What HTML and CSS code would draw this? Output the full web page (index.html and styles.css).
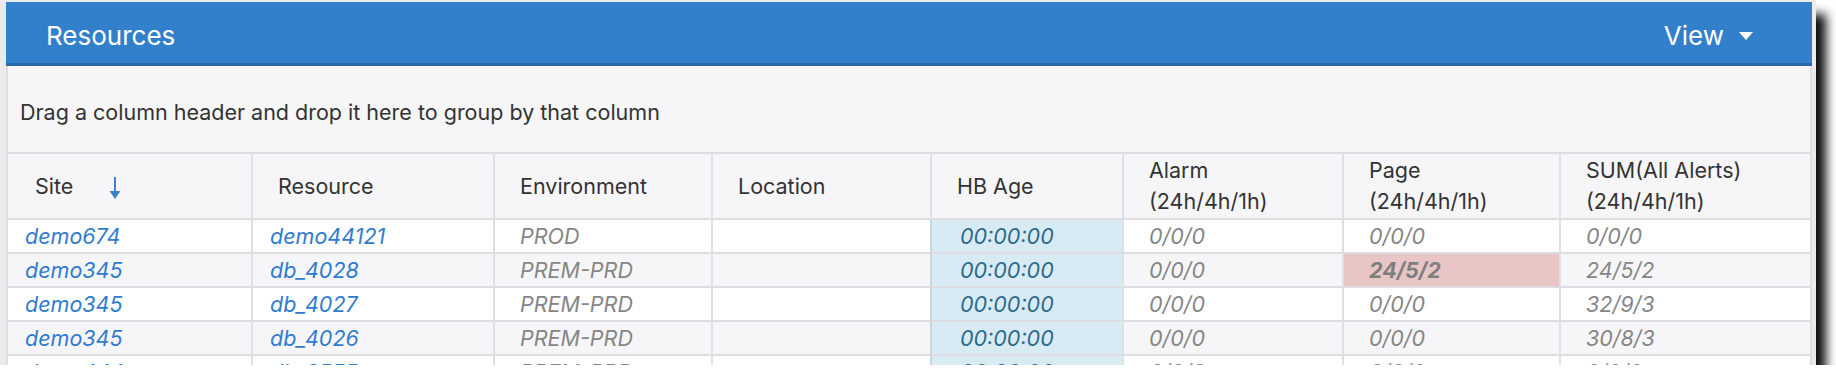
FILE: index.html
```html
<!DOCTYPE html>
<html>
<head>
<meta charset="utf-8">
<link rel="stylesheet" href="styles.css">
</head>
<body>
<div class="window">
  <div class="panel">
    <div class="panel-head">
      <div class="title">Resources</div>
      <div class="view">View <span class="caret"></span></div>
    </div>
    <div class="panel-body">
      <div class="group-area">Drag a column header and drop it here to group by that column</div>
      <div class="grid">
        <div class="th">Site <svg class="sort" width="14" height="24" viewBox="0 0 14 24"><line x1="7" y1="1" x2="7" y2="17" stroke="#3a82cc" stroke-width="2"/><polygon points="1.5,15 12.5,15 7,23" fill="#3a82cc"/></svg></div>
        <div class="th">Resource</div>
        <div class="th">Environment</div>
        <div class="th">Location</div>
        <div class="th">HB Age</div>
        <div class="th two">Alarm<br>(24h/4h/1h)</div>
        <div class="th two">Page<br>(24h/4h/1h)</div>
        <div class="th two">SUM(All Alerts)<br>(24h/4h/1h)</div>

        <div class="td link">demo674</div><div class="td link">demo44121</div><div class="td">PROD</div><div class="td"></div><div class="td hb">00:00:00</div><div class="td">0/0/0</div><div class="td">0/0/0</div><div class="td">0/0/0</div>

        <div class="td alt link">demo345</div><div class="td alt link">db_4028</div><div class="td alt">PREM-PRD</div><div class="td alt"></div><div class="td alt hb">00:00:00</div><div class="td alt">0/0/0</div><div class="td alt hot">24/5/2</div><div class="td alt">24/5/2</div>

        <div class="td link">demo345</div><div class="td link">db_4027</div><div class="td">PREM-PRD</div><div class="td"></div><div class="td hb">00:00:00</div><div class="td">0/0/0</div><div class="td">0/0/0</div><div class="td">32/9/3</div>

        <div class="td alt link">demo345</div><div class="td alt link">db_4026</div><div class="td alt">PREM-PRD</div><div class="td alt"></div><div class="td alt hb">00:00:00</div><div class="td alt">0/0/0</div><div class="td alt">0/0/0</div><div class="td alt">30/8/3</div>

        <div class="td link">demo444</div><div class="td link">db_3555</div><div class="td">PREM-PRD</div><div class="td"></div><div class="td hb">00:00:00</div><div class="td">0/0/0</div><div class="td">0/0/0</div><div class="td">0/0/0</div>
      </div>
    </div>
  </div>
</div>
</body>
</html>
```

FILE: styles.css
```css
html, body {
  margin: 0;
  padding: 0;
  background: #ffffff;
}
body {
  font-family: Inter, "Noto Sans", "Liberation Sans", sans-serif;
}
.window {
  width: 1816px;
  height: 365px;
  box-sizing: border-box;
  padding: 2px 4px 0 6px;
  background: #ebebeb;
  overflow: hidden;
  box-shadow: 10px 14px 10px rgba(0, 0, 0, 0.95);
}
.panel {
  display: flex;
  flex-direction: column;
}
.panel-head {
  height: 64px;
  box-sizing: border-box;
  padding: 6px 59px 0 40px;
  border-bottom: 3px solid #2a69a8;
  background: #327fcc;
  color: #ffffff;
  display: flex;
  align-items: center;
  justify-content: space-between;
}
.title {
  font-size: 26px;
}
.view {
  font-size: 26px;
  display: flex;
  align-items: center;
  gap: 15px;
}
.caret {
  width: 0;
  height: 0;
  border-left: 7px solid transparent;
  border-right: 7px solid transparent;
  border-top: 8px solid #ffffff;
}
.panel-body {
  background: #f6f6f8;
  border-left: 2px solid #dfdfe3;
  border-right: 2px solid #dfdfe3;
}
.group-area {
  height: 88px;
  box-sizing: border-box;
  border-bottom: 2px solid #dcdce1;
  display: flex;
  align-items: center;
  padding: 6px 0 0 12px;
  font-size: 21.5px;
  color: #333333;
}
.grid {
  display: grid;
  grid-template-columns: 243px 242px 218px 219px 192px 220px 217px 1fr;
}
.th {
  height: 66px;
  box-sizing: border-box;
  border-bottom: 2px solid #dcdce1;
  border-left: 2px solid #e0e0e4;
  padding-left: 25px;
  display: flex;
  align-items: center;
  font-size: 21.5px;
  color: #333333;
  line-height: 31px;
}
.th:first-child {
  border-left: none;
  padding-left: 27px;
}
.sort {
  margin-left: 35px;
  margin-top: 4px;
}
.td {
  height: 34px;
  box-sizing: border-box;
  border-bottom: 2px solid #dcdce1;
  border-left: 2px solid #e0e0e4;
  padding-left: 25px;
  display: flex;
  align-items: center;
  font-size: 21.5px;
  font-style: italic;
  color: #868686;
  background: #ffffff;
}
.td:nth-child(8n+1) {
  border-left: none;
}
.td.alt {
  background: #f6f6f8;
}
.td.link {
  color: #2f7ccf;
  padding-left: 17px;
}
.td.hb {
  background: #d8ebf5;
  color: #2d6a8b;
  padding-left: 28px;
  border-left-color: #c4d7e3;
}
.td.hot {
  background: #e8c6c6;
  font-weight: bold;
  color: #7e7e7e;
}
```
